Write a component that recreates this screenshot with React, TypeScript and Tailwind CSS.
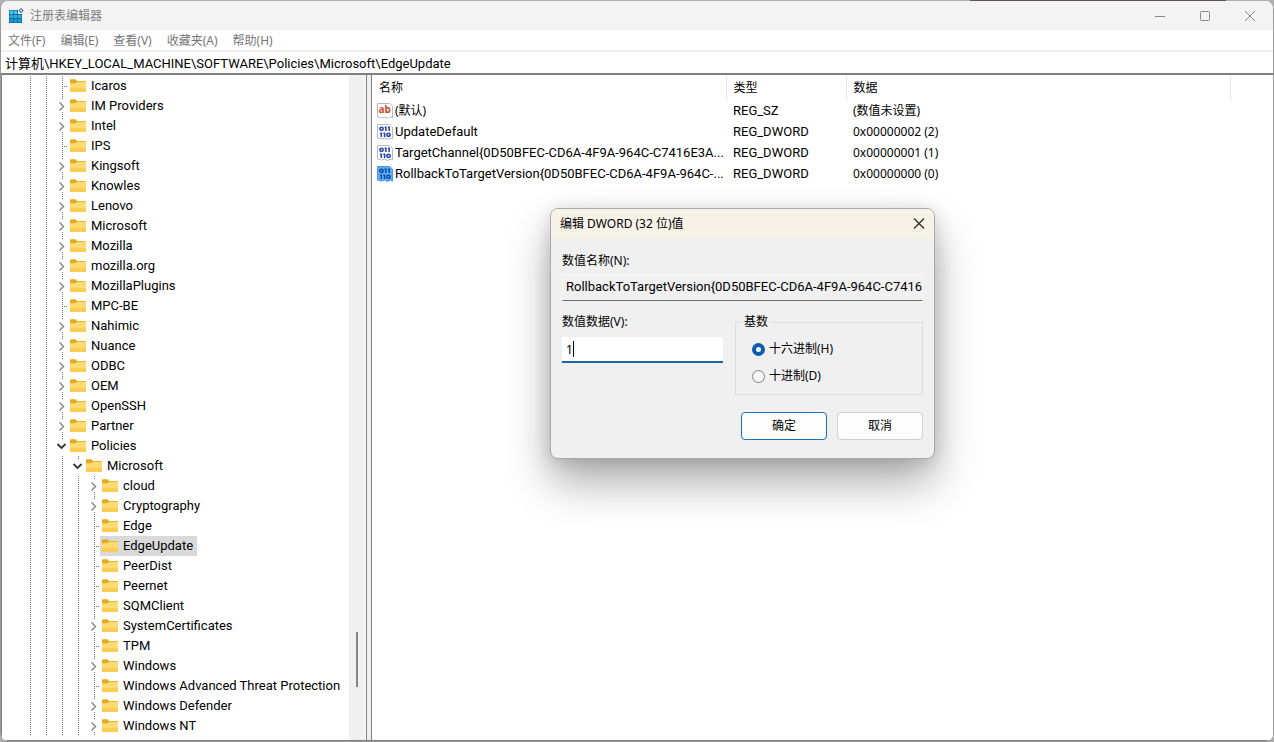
import { useState } from 'react';
import clsx from 'clsx';

type Expander = 'open' | 'closed' | 'none';

interface TreeItem {
  name: string;
  depth: number;
  expander: Expander;
  selected?: boolean;
}

interface RegValue {
  name: string;
  type: string;
  data: string;
  selected?: boolean;
}

const treeItems: TreeItem[] = [
  { name: 'Icaros', depth: 2, expander: 'none' },
  { name: 'IM Providers', depth: 2, expander: 'closed' },
  { name: 'Intel', depth: 2, expander: 'closed' },
  { name: 'IPS', depth: 2, expander: 'none' },
  { name: 'Kingsoft', depth: 2, expander: 'closed' },
  { name: 'Knowles', depth: 2, expander: 'closed' },
  { name: 'Lenovo', depth: 2, expander: 'closed' },
  { name: 'Microsoft', depth: 2, expander: 'closed' },
  { name: 'Mozilla', depth: 2, expander: 'closed' },
  { name: 'mozilla.org', depth: 2, expander: 'closed' },
  { name: 'MozillaPlugins', depth: 2, expander: 'closed' },
  { name: 'MPC-BE', depth: 2, expander: 'none' },
  { name: 'Nahimic', depth: 2, expander: 'closed' },
  { name: 'Nuance', depth: 2, expander: 'closed' },
  { name: 'ODBC', depth: 2, expander: 'closed' },
  { name: 'OEM', depth: 2, expander: 'closed' },
  { name: 'OpenSSH', depth: 2, expander: 'closed' },
  { name: 'Partner', depth: 2, expander: 'closed' },
  { name: 'Policies', depth: 2, expander: 'open' },
  { name: 'Microsoft', depth: 3, expander: 'open' },
  { name: 'cloud', depth: 4, expander: 'closed' },
  { name: 'Cryptography', depth: 4, expander: 'closed' },
  { name: 'Edge', depth: 4, expander: 'none' },
  { name: 'EdgeUpdate', depth: 4, expander: 'none', selected: true },
  { name: 'PeerDist', depth: 4, expander: 'none' },
  { name: 'Peernet', depth: 4, expander: 'none' },
  { name: 'SQMClient', depth: 4, expander: 'none' },
  { name: 'SystemCertificates', depth: 4, expander: 'closed' },
  { name: 'TPM', depth: 4, expander: 'none' },
  { name: 'Windows', depth: 4, expander: 'closed' },
  { name: 'Windows Advanced Threat Protection', depth: 4, expander: 'none' },
  { name: 'Windows Defender', depth: 4, expander: 'closed' },
  { name: 'Windows NT', depth: 4, expander: 'closed' },
];

const values: RegValue[] = [
  { name: '(默认)', type: 'REG_SZ', data: '(数值未设置)' },
  { name: 'UpdateDefault', type: 'REG_DWORD', data: '0x00000002 (2)' },
  { name: 'TargetChannel{0D50BFEC-CD6A-4F9A-964C-C7416E3A...', type: 'REG_DWORD', data: '0x00000001 (1)' },
  { name: 'RollbackToTargetVersion{0D50BFEC-CD6A-4F9A-964C-...', type: 'REG_DWORD', data: '0x00000000 (0)', selected: true },
];

const menus = ['文件(F)', '编辑(E)', '查看(V)', '收藏夹(A)', '帮助(H)'];

const isLatin = (text: string) => /^[\x20-\x7e]*$/.test(text);

function RegeditIcon() {
  return (
    <svg className="w-4 h-4" viewBox="0 0 16 16">
      <path d="M1 2h9v4h4v9H1z" fill="#0f5c8c" />
      <path d="M1.5 2.5h3.6v3.6H1.5zM5.7 2.5h3.6v3.6H5.7z" fill="#45c4f0" />
      <path d="M1.5 6.7h3.6v3.6H1.5zM5.7 6.7h3.6v3.6H5.7zM9.9 6.7h3.6v3.6H9.9z" fill="#2bb0e6" />
      <path d="M1.5 10.9h3.6v3.6H1.5zM5.7 10.9h3.6v3.6H5.7zM9.9 10.9h3.6v3.6H9.9z" fill="#1a98d6" />
      <path d="M13 0l2.6 2.6L13 5.2l-2.6-2.6z" fill="#2b6c93" />
      <circle cx="13" cy="2.6" r="1.1" fill="#d6f1fc" />
    </svg>
  );
}

function FolderIcon() {
  return (
    <svg className="w-4 h-4 shrink-0" viewBox="0 0 16 16">
      <path d="M0 2.2a1 1 0 0 1 1-1h4.4l1.8 1.8H15a1 1 0 0 1 1 1V8H0z" fill="#e2ab1f" />
      <path d="M0 5.2h5.4L7.2 3.8H15a1 1 0 0 1 1 1V13a1 1 0 0 1-1 1H1a1 1 0 0 1-1-1z" fill="#ffdb74" />
      <path d="M0 10h16v3a1 1 0 0 1-1 1H1a1 1 0 0 1-1-1z" fill="#fccd52" />
    </svg>
  );
}

function GuideLine() {
  return (
    <svg className="w-4 h-5 shrink-0" viewBox="0 0 16 20" shapeRendering="crispEdges">
      <path d="M8.5 0v20" stroke="#707070" strokeDasharray="1 1" />
    </svg>
  );
}

function ExpanderCell({ kind }: { kind: Expander }) {
  return (
    <svg className="w-3.5 h-5 shrink-0" viewBox="0 0 14 20" fill="none">
      <g stroke="#707070" strokeDasharray="1 1" shapeRendering="crispEdges">
        {kind === 'none' && <path d="M8.5 0v20M8 10.5h6" />}
        {kind === 'closed' && <path d="M8.5 0v4M8.5 16v4" />}
        {kind === 'open' && <path d="M8.5 0v4" />}
      </g>
      {kind === 'closed' && <path d="M5.5 6.5l4 4-4 4" stroke="#8a8a8a" strokeWidth="1.5" />}
      {kind === 'open' && <path d="M3.5 8l4 4 4-4" stroke="#333" strokeWidth="1.8" />}
    </svg>
  );
}

function ValueIcon({ type, selected }: { type: string; selected?: boolean }) {
  const ink = selected ? '#0b4fa8' : '#2b45b5';
  return (
    <svg className="w-4 h-4 shrink-0" viewBox="0 0 16 16">
      <path
        d="M.5 .5h12.3l2.7 2.7V15l-2.5-1-2.5 1.5-3-1.5-3 1-4-1z"
        fill={selected ? '#62aef0' : '#fff'}
        stroke={selected ? '#4a98e0' : '#b4b8c0'}
      />
      {type === 'REG_SZ' ? (
        <text x="1.5" y="9.5" fontSize="10" fontWeight="700" fill="#cf4a2c" fontFamily="Noto Sans, sans-serif">ab</text>
      ) : (
        <g fill="none" stroke={ink} strokeWidth="1.6">
          <ellipse cx="4.5" cy="4.8" rx="1.7" ry="1.6" />
          <path d="M8.9 2.6v4.4M7.6 3.2h1.3M12.2 2.6v4.4M10.9 3.2h1.3" />
          <path d="M4.3 8.6V13M3 9.2h1.3M7.6 8.6V13M6.3 9.2h1.3" />
          <ellipse cx="11.5" cy="10.8" rx="1.7" ry="1.6" />
        </g>
      )}
    </svg>
  );
}

function TitleBar() {
  return (
    <header className="h-[29px] shrink-0 flex items-center justify-between bg-[#f3f3f3] text-[#7d7d7d]">
      <div className="flex items-center gap-1.5 pl-[7px]">
        <RegeditIcon />
        <h1 className="text-xs">注册表编辑器</h1>
      </div>
      <div className="flex h-full">
        <button aria-label="最小化" className="w-[45px] flex items-center justify-center">
          <svg className="w-3 h-3" viewBox="0 0 12 12"><path d="M1 6.5h10" stroke="#888" /></svg>
        </button>
        <button aria-label="最大化" className="w-[45px] flex items-center justify-center">
          <svg className="w-3 h-3" viewBox="0 0 12 12"><rect x="1.5" y="1.5" width="9" height="9" rx="1" fill="none" stroke="#888" /></svg>
        </button>
        <button aria-label="关闭" className="w-[46px] flex items-center justify-center">
          <svg className="w-3 h-3" viewBox="0 0 12 12"><path d="M1 1l10 10M11 1L1 11" stroke="#888" /></svg>
        </button>
      </div>
    </header>
  );
}

function KeyTree() {
  return (
    <aside className="w-[365px] shrink-0 flex border-r border-[#808080]">
      <ul className="flex-1 min-w-0 overflow-hidden pl-5 pt-px font-[Roboto,sans-serif] text-[13px]">
        {treeItems.map((item, i) => (
          <li key={i} className="flex h-5 items-center">
            {Array.from({ length: item.depth }, (_, d) => <GuideLine key={d} />)}
            <ExpanderCell kind={item.expander} />
            <div className={clsx('flex h-5 items-center gap-[5px] pl-0.5 pr-1 whitespace-nowrap', item.selected && 'bg-[#d9d9d9]')}>
              <FolderIcon />
              <span>{item.name}</span>
            </div>
          </li>
        ))}
      </ul>
      <div className="w-4 mr-px flex flex-col items-center bg-[#f0f0f0]">
        <div className="flex-[557]" />
        <div className="w-0.5 h-[55px] bg-[#858585]" />
        <div className="flex-[53]" />
      </div>
    </aside>
  );
}

function ValueTable() {
  return (
    <main className="flex-1 min-w-0 border-l border-[#808080]">
      <table className="w-full table-fixed text-xs">
        <colgroup>
          <col className="w-[354px]" />
          <col className="w-[120px]" />
          <col className="w-[384px]" />
          <col />
        </colgroup>
        <thead>
          <tr className="h-[25px] text-left">
            <th className="px-[7px] font-normal border-r border-[#e5e5e5]">名称</th>
            <th className="px-[7px] font-normal border-r border-[#e5e5e5]">类型</th>
            <th className="px-[7px] font-normal border-r border-[#e5e5e5]">数据</th>
            <th />
          </tr>
        </thead>
        <tbody>
          {values.map((v) => (
            <tr key={v.name} className="h-[21px]">
              <td className="p-0 pl-[5px]">
                <div className="flex items-center gap-0.5 whitespace-nowrap">
                  <ValueIcon type={v.type} selected={v.selected} />
                  <span className={clsx(isLatin(v.name) && 'font-[Roboto,sans-serif] text-[13px] leading-4')}>{v.name}</span>
                </div>
              </td>
              <td className="py-0 px-[7px] font-[Roboto,sans-serif] text-[13px] leading-4">{v.type}</td>
              <td className="py-0 px-[7px]">{v.data}</td>
              <td />
            </tr>
          ))}
        </tbody>
      </table>
    </main>
  );
}

function EditDialog() {
  const [data, setData] = useState('1');
  const [base, setBase] = useState('hex');

  const radioClass =
    'appearance-none w-[13px] h-[13px] rounded-full border border-[#808080] bg-[#f6f6f6] checked:border-4 checked:border-[#0a5cb0] checked:bg-white';

  return (
    <div
      role="dialog"
      aria-labelledby="dialog-title"
      className="absolute left-[550px] top-[208px] w-[385px] rounded-lg border border-[#a9a9a9] bg-[#f0f0f0] overflow-hidden text-xs shadow-[0_24px_44px_rgba(0,0,0,0.32),0_2px_18px_rgba(0,0,0,0.14)]"
    >
      <div className="h-[30px] flex items-center justify-between bg-[#f7f2e8] px-[9px]">
        <h2 id="dialog-title">编辑 DWORD (32 位)值</h2>
        <button aria-label="关闭对话框">
          <svg className="w-3 h-3" viewBox="0 0 12 12"><path d="M1 .5l10 10M11 .5L1 10.5" stroke="#222" strokeWidth="1.1" /></svg>
        </button>
      </div>

      <div className="px-[11px] pt-3 pb-[18px]">
        <label htmlFor="value-name" className="block leading-5">数值名称(N):</label>
        <input
          id="value-name"
          readOnly
          value="RollbackToTargetVersion{0D50BFEC-CD6A-4F9A-964C-C7416"
          className="block w-full h-[26px] mt-1 pl-[3px] pb-1 bg-[#f0f0f0] border border-[#f8f8f8] border-b-[#707070] font-[Roboto,sans-serif] text-[13px]"
        />

        <div className="flex gap-3 mt-[11px]">
          <div className="w-[161px]">
            <label htmlFor="value-data" className="block leading-5">数值数据(V):</label>
            <div className="relative mt-[5px]">
              <input
                id="value-data"
                value={data}
                onChange={(e) => setData(e.target.value)}
                className="block w-full h-[26px] px-1 bg-white border-b-2 border-[#1a65a5] outline-none"
              />
              <span className="absolute left-[11px] top-1 w-px h-4 bg-black" />
            </div>
          </div>
          <fieldset className="flex-1 h-[83px] border border-[#dcdcdc] px-4 pb-2">
            <legend className="-ml-2.5 px-0.5 leading-5">基数</legend>
            <label className="flex items-center gap-1 mt-[7px] leading-5">
              <input type="radio" name="base" checked={base === 'hex'} onChange={() => setBase('hex')} className={radioClass} />
              十六进制(H)
            </label>
            <label className="flex items-center gap-1 mt-[7px] leading-5">
              <input type="radio" name="base" checked={base === 'dec'} onChange={() => setBase('dec')} className={radioClass} />
              十进制(D)
            </label>
          </fieldset>
        </div>

        <div className="flex justify-end gap-2.5 mt-[17px]">
          <button className="w-[86px] h-7 rounded border border-[#1a6fb0] bg-[#fdfdfd]">确定</button>
          <button className="w-[86px] h-7 rounded border border-[#d0d0d0] bg-[#fdfdfd]">取消</button>
        </div>
      </div>
    </div>
  );
}

export default function App() {
  return (
    <div className="h-screen flex flex-col bg-[#b0b0b0] text-black font-['Noto_Sans','Noto_Sans_CJK_SC',sans-serif]">
      {/* desktop edge above the window */}
      <div className="h-px shrink-0 flex justify-end">
        <div className="w-64 mr-12 bg-[#5c5250]" />
      </div>

      <div className="flex-1 min-h-0 flex flex-col rounded-lg border border-t-0 border-[#9a9a9a] bg-white overflow-hidden">
        <TitleBar />

        <nav className="h-5 shrink-0 flex items-center gap-[15px] pl-[7px] pt-0.5 bg-white text-xs text-[#767676]">
          {menus.map((m) => (
            <button key={m}>{m}</button>
          ))}
        </nav>

        <input
          aria-label="地址"
          className="h-[23px] shrink-0 w-full px-1 pb-px border-t-2 border-[#efefef] font-[Roboto,'Noto_Sans_CJK_SC',sans-serif] text-[13px] outline-none"
          defaultValue="计算机\HKEY_LOCAL_MACHINE\SOFTWARE\Policies\Microsoft\EdgeUpdate"
        />

        <div className="flex-1 min-h-0 flex gap-1 border-t-2 border-l border-b border-[#808080] bg-[#f0f0f0]">
          <div className="flex bg-white"><KeyTree /></div>
          <div className="flex flex-1 min-w-0 bg-white"><ValueTable /></div>
        </div>
      </div>

      <EditDialog />
    </div>
  );
}
